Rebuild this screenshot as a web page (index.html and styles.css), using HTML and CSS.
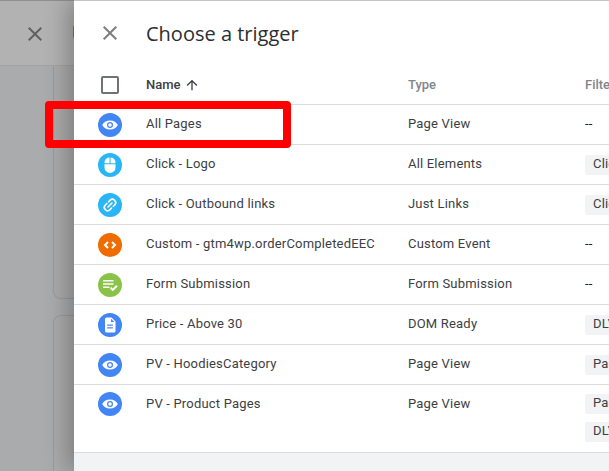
FILE: index.html
```html
<!DOCTYPE html>
<html lang="en">
<head>
<meta charset="utf-8">
<title>Choose a trigger</title>
<link rel="stylesheet" href="styles.css">
</head>
<body>
<div class="stage">
  <div class="backdrop">
    <header class="bd-head">
      <svg class="bd-x" width="24" height="24" viewBox="0 0 24 24"><path d="M19 6.41 17.59 5 12 10.59 6.41 5 5 6.41 10.59 12 5 17.59 6.41 19 12 13.41 17.59 19 19 17.59 13.41 12z"/></svg>
      <span class="bd-title">U</span>
    </header>
    <div class="bd-body">
      <div class="bd-card bd-card-a"></div>
      <div class="bd-card bd-card-b"></div>
    </div>
  </div>
  <main class="panel">
    <div class="panel-head">
      <svg class="panel-x" width="24" height="24" viewBox="0 0 24 24"><path d="M19 6.41 17.59 5 12 10.59 6.41 5 5 6.41 10.59 12 5 17.59 6.41 19 12 13.41 17.59 19 19 17.59 13.41 12z"/></svg>
      <h1 class="title">Choose a trigger</h1>
    </div>
    <div class="row head-row">
      <div class="cell-icon"><span class="checkbox"></span></div>
      <div class="cell-name name-head">Name
        <svg class="sort" width="16" height="16" viewBox="0 0 24 24"><path d="M4 12l1.41 1.41L11 7.83V20h2V7.83l5.58 5.59L20 12l-8-8z"/></svg>
      </div>
      <div class="cell-type">Type</div>
      <div class="cell-filter">Filter</div>
    </div>
    <div class="row">
      <div class="cell-icon"><svg class="ico" width="24" height="24" viewBox="0 0 24 24"><circle class="c-blue" cx="12" cy="12" r="12"/><use href="#eye"/></svg></div>
      <div class="cell-name">All Pages</div>
      <div class="cell-type">Page View</div>
      <div class="cell-filter plain">--</div>
    </div>
    <div class="row">
      <div class="cell-icon"><svg class="ico" width="24" height="24" viewBox="0 0 24 24"><circle class="c-sky" cx="12" cy="12" r="12"/><path class="w" d="M12.500 4.600v5.600h5V9.600a5 5 0 0 0-5-5zM11.500 4.600a5 5 0 0 0-5 5v.6h5zM6.500 11.200V14.400a5.500 5.500 0 0 0 11 0v-3.200z"/></svg></div>
      <div class="cell-name">Click - Logo</div>
      <div class="cell-type">All Elements</div>
      <div class="cell-filter"><span class="chip">Click</span></div>
    </div>
    <div class="row">
      <div class="cell-icon"><svg class="ico" width="24" height="24" viewBox="0 0 24 24"><circle class="c-sky" cx="12" cy="12" r="12"/><g class="link" transform="rotate(-45 12 12)"><path d="M10.800 8.700H8.700a3.300 3.300 0 0 0 0 6.600h2.100M13.200 8.700h2.100a3.300 3.300 0 0 1 0 6.600h-2.100M9.200 12h5.600"/></g></svg></div>
      <div class="cell-name">Click - Outbound links</div>
      <div class="cell-type">Just Links</div>
      <div class="cell-filter"><span class="chip">Click</span></div>
    </div>
    <div class="row">
      <div class="cell-icon"><svg class="ico" width="24" height="24" viewBox="0 0 24 24"><circle class="c-orange" cx="12" cy="12" r="12"/><path class="code" d="M10 9 7 12l3 3M14 9l3 3-3 3"/></svg></div>
      <div class="cell-name">Custom - gtm4wp.orderCompletedEEC</div>
      <div class="cell-type">Custom Event</div>
      <div class="cell-filter plain">--</div>
    </div>
    <div class="row">
      <div class="cell-icon"><svg class="ico" width="24" height="24" viewBox="0 0 24 24"><circle class="c-green" cx="12" cy="12" r="12"/><path class="w" d="M5 7h10.500v1.500H5zM5 10.300h10.500v1.500H5zM5 13.600h6.500v1.500H5z"/><path class="code" d="m12.500 14.600 2.300 2.300 4.200-4.200"/></svg></div>
      <div class="cell-name">Form Submission</div>
      <div class="cell-type">Form Submission</div>
      <div class="cell-filter plain">--</div>
    </div>
    <div class="row">
      <div class="cell-icon"><svg class="ico" width="24" height="24" viewBox="0 0 24 24"><circle class="c-blue" cx="12" cy="12" r="12"/><path class="w" fill-rule="evenodd" d="M8.500 4.500h5l4 4v9.500a1.500 1.500 0 0 1-1.500 1.500H8.500A1.500 1.500 0 0 1 7 18V6a1.500 1.500 0 0 1 1.500-1.500zM13 5.700V9h3.300zM9.200 11.500v1.200h5.600v-1.200zM9.200 14.200v1.200h5.600v-1.200z"/></svg></div>
      <div class="cell-name">Price - Above 30</div>
      <div class="cell-type">DOM Ready</div>
      <div class="cell-filter"><span class="chip">DLV</span></div>
    </div>
    <div class="row">
      <div class="cell-icon"><svg class="ico" width="24" height="24" viewBox="0 0 24 24"><circle class="c-blue" cx="12" cy="12" r="12"/><use href="#eye"/></svg></div>
      <div class="cell-name">PV - HoodiesCategory</div>
      <div class="cell-type">Page View</div>
      <div class="cell-filter"><span class="chip">Page</span></div>
    </div>
    <div class="row row-tall">
      <div class="cell-icon"><svg class="ico" width="24" height="24" viewBox="0 0 24 24"><circle class="c-blue" cx="12" cy="12" r="12"/><use href="#eye"/></svg></div>
      <div class="cell-name">PV - Product Pages</div>
      <div class="cell-type">Page View</div>
      <div class="cell-filter stack"><span class="chip">Page</span><span class="chip">DLV</span></div>
    </div>
    <div class="panel-foot"></div>
  </main>
  <div class="highlight"></div>
  <svg class="defs" width="0" height="0"><defs><g id="eye"><path class="w" fill-rule="evenodd" d="M12 7.500C8.400 7.500 5.300 9.400 4.200 12c1.100 2.600 4.200 4.500 7.800 4.500s6.700-1.900 7.800-4.500C18.700 9.400 15.600 7.500 12 7.500zm0 7.500a3 3 0 1 1 0-6 3 3 0 0 1 0 6zm0-4.800a1.800 1.800 0 1 0 0 3.600 1.800 1.800 0 0 0 0-3.600z"/></g></defs></svg>
</div>
</body>
</html>
```

FILE: styles.css
```css
* { box-sizing: border-box; }
html, body { margin: 0; padding: 0; }
body { font-family: Roboto, "Liberation Sans", sans-serif; }
.stage { position: relative; width: 609px; height: 471px; overflow: hidden; background: #a9abad; }
.backdrop { position: absolute; left: 0; top: 0; width: 74px; height: 471px; border-top: 1px solid #8f8f8f; background: #a9abad; }
.bd-head { height: 65px; display: flex; align-items: center; gap: 25px; padding: 1px 0 0 23px; background: #b2b2b2; border-bottom: 1px solid #a3a3a3; overflow: hidden; }
.bd-x { flex: none; fill: #5f6061; }
.bd-title { font-size: 20px; color: #555; }
.bd-body { display: flex; flex-direction: column; gap: 16px; padding-left: 53px; }
.bd-card { background: #ababab; border: 1px solid #9b9b9b; border-right: 0; }
.bd-card-a { height: 233px; border-top: 0; border-radius: 0 0 0 8px; }
.bd-card-b { height: 160px; border-bottom: 0; border-radius: 8px 0 0 0; }
.panel { position: absolute; left: 74px; top: 0; width: 535px; height: 471px; background: #fff; border-top: 1px solid #c4c4c4; box-shadow: -6px 0 22px rgba(0, 0, 0, 0.28); display: flex; flex-direction: column; }
.panel-head { height: 64px; display: flex; align-items: center; gap: 24px; padding-left: 24px; }
.panel-x { flex: none; fill: #7b7e82; }
.title { margin: 0; font: 400 20px "Open Sans", sans-serif; color: #2b2e31; white-space: nowrap; }
.row { flex: none; height: 40px; display: grid; grid-template-columns: 72px 262px 177px 1fr; align-items: center; border-bottom: 1px solid #dadce0; font-size: 13px; color: #3c4043; letter-spacing: 0.19px; }
.row > .cell-name, .row > .cell-type, .row > .plain { padding-bottom: 2px; }
.head-row { font-weight: 500; color: #80868b; letter-spacing: 0; }
.head-row > .cell-name, .head-row > .cell-type { padding-bottom: 0; }
.row-tall { height: 68px; align-items: start; }
.row-tall > .cell-name, .row-tall > .cell-type { padding: 11px 0 0; }
.row-tall > .cell-icon { padding-top: 7px; }
.row-tall > .stack { padding-top: 9px; }
.cell-icon { display: flex; justify-content: center; }
.cell-name { white-space: nowrap; }
.name-head { color: #3c4043; display: flex; align-items: center; gap: 3px; }
.sort { fill: #3c4043; }
.cell-type { white-space: nowrap; }
.cell-filter { white-space: nowrap; }
.plain { color: #202124; }
.checkbox { display: block; width: 18px; height: 18px; border: 2px solid #6f7377; border-radius: 2px; }
.ico { display: block; }
.c-blue { fill: #4285f4; }
.c-sky { fill: #29b6f6; }
.c-orange { fill: #ef6c00; }
.c-green { fill: #8bc34a; }
.w { fill: #fff; }
.link { fill: none; stroke: #fff; stroke-width: 1.6; stroke-linecap: round; }
.code { fill: none; stroke: #fff; stroke-width: 2; }
.chip { display: block; height: 20px; line-height: 18px; padding: 0 8px; width: max-content; background: #f1f3f4; border-radius: 2px; color: #3c4043; }
.stack { display: flex; flex-direction: column; align-items: flex-start; gap: 8px; }
.panel-foot { flex: 1; background: #f1f3f4; }
.highlight { position: absolute; left: 45px; top: 101px; width: 246px; height: 47px; border: 8px solid #ff0000; border-radius: 4px; }
.defs { position: absolute; }
```
